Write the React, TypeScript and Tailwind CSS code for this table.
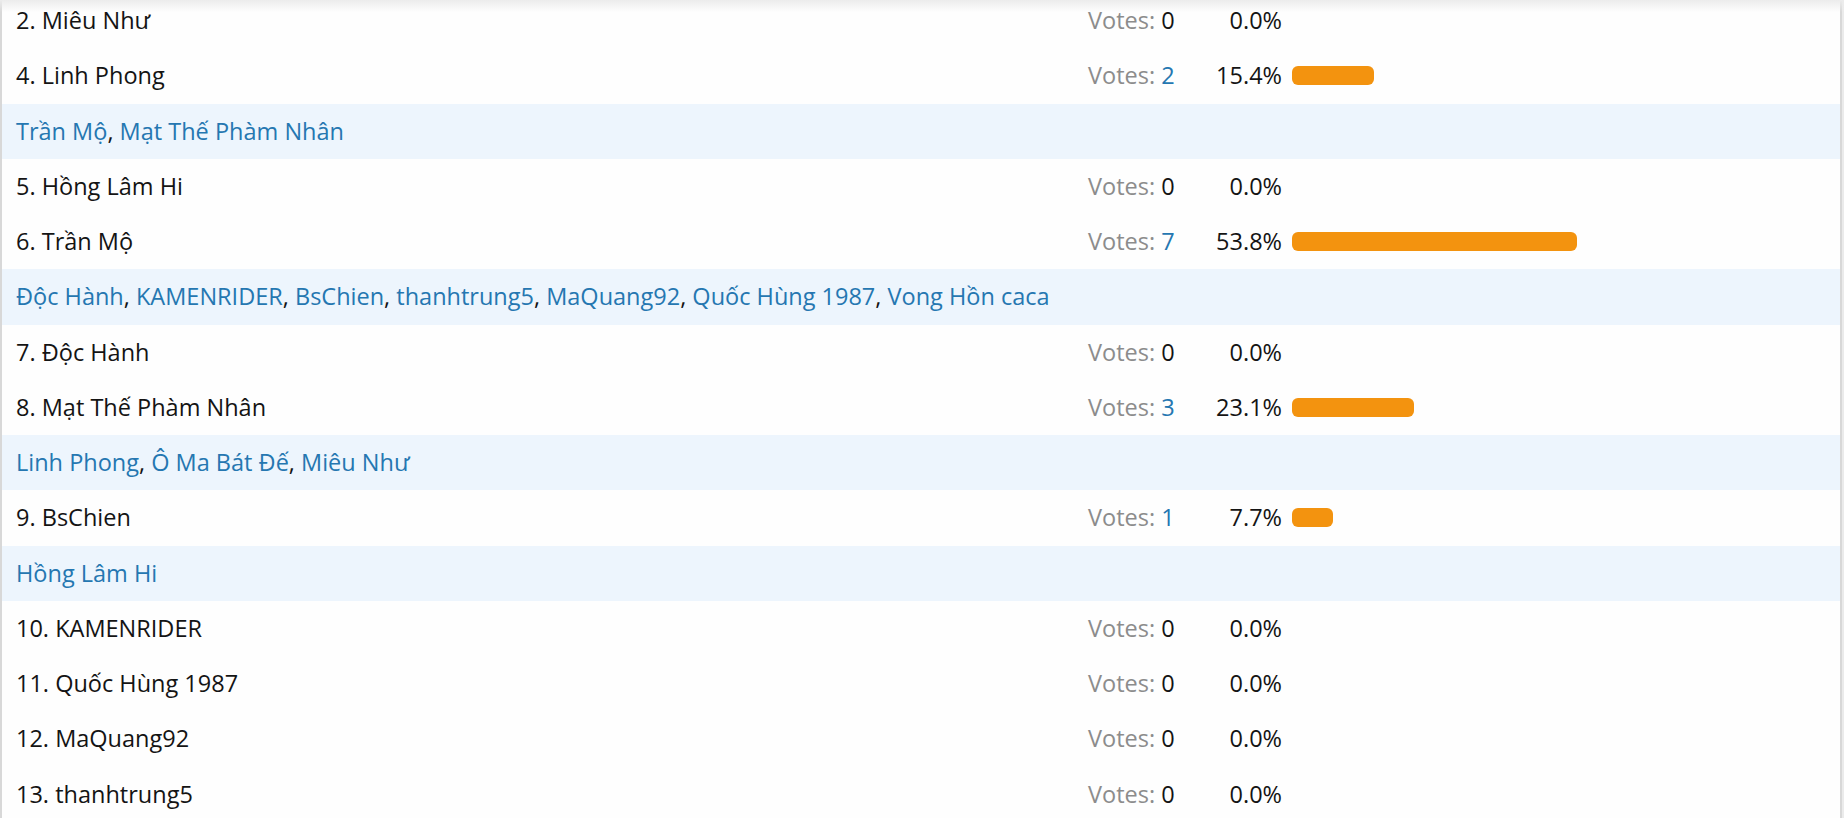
import React from 'react';

type Row =
    | { kind: 'option'; label: string; votes: number; pct: number }
    | { kind: 'voters'; names: string[] };

const rows: Row[] = [
    { kind: 'option', label: '2. Miêu Như', votes: 0, pct: 0 },
    { kind: 'option', label: '4. Linh Phong', votes: 2, pct: 15.4 },
    { kind: 'voters', names: ['Trần Mộ', 'Mạt Thế Phàm Nhân'] },
    { kind: 'option', label: '5. Hồng Lâm Hi', votes: 0, pct: 0 },
    { kind: 'option', label: '6. Trần Mộ', votes: 7, pct: 53.8 },
    { kind: 'voters', names: ['Độc Hành', 'KAMENRIDER', 'BsChien', 'thanhtrung5', 'MaQuang92', 'Quốc Hùng 1987', 'Vong Hồn caca'] },
    { kind: 'option', label: '7. Độc Hành', votes: 0, pct: 0 },
    { kind: 'option', label: '8. Mạt Thế Phàm Nhân', votes: 3, pct: 23.1 },
    { kind: 'voters', names: ['Linh Phong', 'Ô Ma Bát Đế', 'Miêu Như'] },
    { kind: 'option', label: '9. BsChien', votes: 1, pct: 7.7 },
    { kind: 'voters', names: ['Hồng Lâm Hi'] },
    { kind: 'option', label: '10. KAMENRIDER', votes: 0, pct: 0 },
    { kind: 'option', label: '11. Quốc Hùng 1987', votes: 0, pct: 0 },
    { kind: 'option', label: '12. MaQuang92', votes: 0, pct: 0 },
    { kind: 'option', label: '13. thanhtrung5', votes: 0, pct: 0 },
];

const BAR_MAX = 530;

export default function App() {
    return (
        <div
            className="relative h-[818px] w-[1844px] overflow-hidden bg-[#ebebeb] text-[23.5px] text-[#141414]"
            style={{ fontFamily: '"Open Sans", "Noto Sans", sans-serif' }}
        >
            <div className="w-[1842px] border-x-2 border-[#d8d8d8] bg-[#fefefe] mt-[-7px]">
                {rows.map((row, i) =>
                    row.kind === 'option' ? (
                        <div key={i} className="flex h-[55.25px] items-center pl-[14px] pr-[18px]">
                            <div className="flex-1">{row.label}</div>
                            <div className="w-[112px]">
                                <span className="text-[#8c8c8c]">Votes: </span>
                                <span className={row.votes > 0 ? 'text-[#2577b1]' : ''}>{row.votes}</span>
                            </div>
                            <div className="w-[82px] text-right">{row.pct.toFixed(1)}%</div>
                            <div className="ml-[10px] w-[530px]">
                                {row.pct > 0 && (
                                    <div
                                        className="h-[19px] rounded-[6px] bg-[#f3930f]"
                                        style={{ width: Math.round((row.pct / 100) * BAR_MAX) }}
                                    />
                                )}
                            </div>
                        </div>
                    ) : (
                        <div key={i} className="flex h-[55.25px] items-center bg-[#edf5fd] pl-[14px]">
                            <div>
                                {row.names.map((n, j) => (
                                    <React.Fragment key={j}>
                                        <span className="text-[#2577b1]">{n}</span>
                                        {j < row.names.length - 1 && ', '}
                                    </React.Fragment>
                                ))}
                            </div>
                        </div>
                    )
                )}
            </div>
            {/* header shadow */}
            <div className="absolute left-0 top-0 h-[12px] w-full bg-linear-to-b from-[#ececec] to-transparent" />
        </div>
    );
}
